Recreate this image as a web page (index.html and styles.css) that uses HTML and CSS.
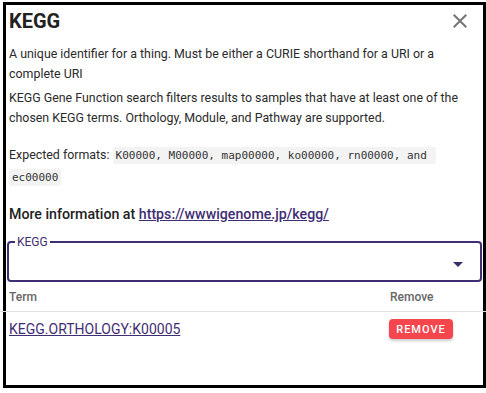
FILE: index.html
```html
<!DOCTYPE html>
<html lang="en">
<head>
  <meta charset="UTF-8"/>
  <title>KEGG</title>
  <link rel="stylesheet" href="styles.css">
</head>
<body>
<div class="dialog">
  <div class="title-row">
    <h2>KEGG</h2>
    <svg class="close" width="24" height="24" viewBox="0 0 24 24">
      <path d="M19 6.41L17.59 5 12 10.59 6.41 5 5 6.41 10.59 12 5 17.59 6.41 19 12 13.41 17.59 19 19 17.59 13.41 12z"/>
    </svg>
  </div>

  <p class="desc first">A unique identifier for a thing. Must be either a CURIE shorthand for a URI or a complete URI</p>
  <p class="desc">KEGG Gene Function search filters results to samples that have at least one of the chosen KEGG terms. Orthology, Module, and Pathway are supported.</p>

  <p class="formats">Expected formats: <code>K00000, M00000, map00000, ko00000, rn00000, and </code><br><code>ec00000</code></p>

  <p class="more">More information at <a href="#">https://wwwigenome.jp/kegg/</a></p>

  <fieldset class="select">
    <legend>KEGG</legend>
    <div class="select-inner">
      <svg class="arrow" width="24" height="24" viewBox="0 0 24 24"><path d="M7 10l5 5 5-5z"/></svg>
    </div>
  </fieldset>

  <div class="terms">
    <div class="terms-head">
      <span>Term</span>
      <span>Remove</span>
    </div>
    <div class="terms-row">
      <a href="#">KEGG.ORTHOLOGY:K00005</a>
      <div><button class="remove-btn">Remove</button></div>
    </div>
  </div>
</div>
</body>
</html>
```

FILE: styles.css
```css
body {
  margin: 0;
  background: #fff;
  color: #2b2b2b;
  font-family: Roboto, "Liberation Sans", sans-serif;
}

.dialog {
  box-sizing: border-box;
  width: 483px;
  height: 386px;
  margin: 2px 0 0 3px;
  border: 3px solid #000;
  padding: 0 0 0 3px;
}

.title-row {
  display: flex;
  align-items: center;
  justify-content: space-between;
  height: 32px;
  padding-right: 11px;
}

.title-row h2 {
  margin: 0;
  font-size: 20px;
  font-weight: 700;
  color: #222;
}

.close {
  fill: #757575;
}

.desc {
  margin: 4px 0 0;
  font-size: 12.4px;
  line-height: 20px;
}

.desc.first {
  margin-top: 7px;
}

.formats {
  margin: 16px 0 0;
  padding-right: 12px;
  font-size: 12.4px;
  line-height: 21px;
}

code {
  font-family: "DejaVu Sans Mono", monospace;
  font-size: 11px;
  white-space: pre;
  background: #f3f3f3;
  border-radius: 3px;
  padding: 2px 3px;
  color: #333;
}

.more {
  margin: 16px 0 0;
  font-size: 14.2px;
  font-weight: 500;
  line-height: 20px;
  color: #222;
}

.more a,
.terms-row a {
  color: #3f2e73;
}

.select {
  margin: 12px 1px 0 -2px;
  padding: 0 10px 0 6px;
  border: 2px solid #3f2e73;
  border-radius: 4px;
}

.select legend {
  padding: 0 2px;
  font-size: 12px;
  line-height: 12px;
  color: #3f2e73;
}

.select-inner {
  display: flex;
  justify-content: flex-end;
  align-items: center;
  height: 32px;
}

.arrow {
  fill: #3b2c6a;
}

.terms-head,
.terms-row {
  display: grid;
  grid-template-columns: 1fr 93px;
  align-items: center;
}

.terms-head {
  height: 29px;
  margin: 0 -4px 0 -9px;
  padding: 0 4px 0 9px;
  border-bottom: 1px solid #e0e0e0;
  font-size: 12px;
  font-weight: 500;
  color: #666;
}

.terms-row {
  height: 34px;
  font-size: 14px;
}

.remove-btn {
  width: 64px;
  height: 20px;
  margin-left: -1px;
  padding: 0;
  border: none;
  border-radius: 4px;
  background: #f5454d;
  color: #fff;
  font-family: Roboto, sans-serif;
  font-size: 11px;
  font-weight: 500;
  letter-spacing: 1px;
  text-transform: uppercase;
  box-shadow: 0 2px 3px rgba(0, 0, 0, 0.2);
}
```
